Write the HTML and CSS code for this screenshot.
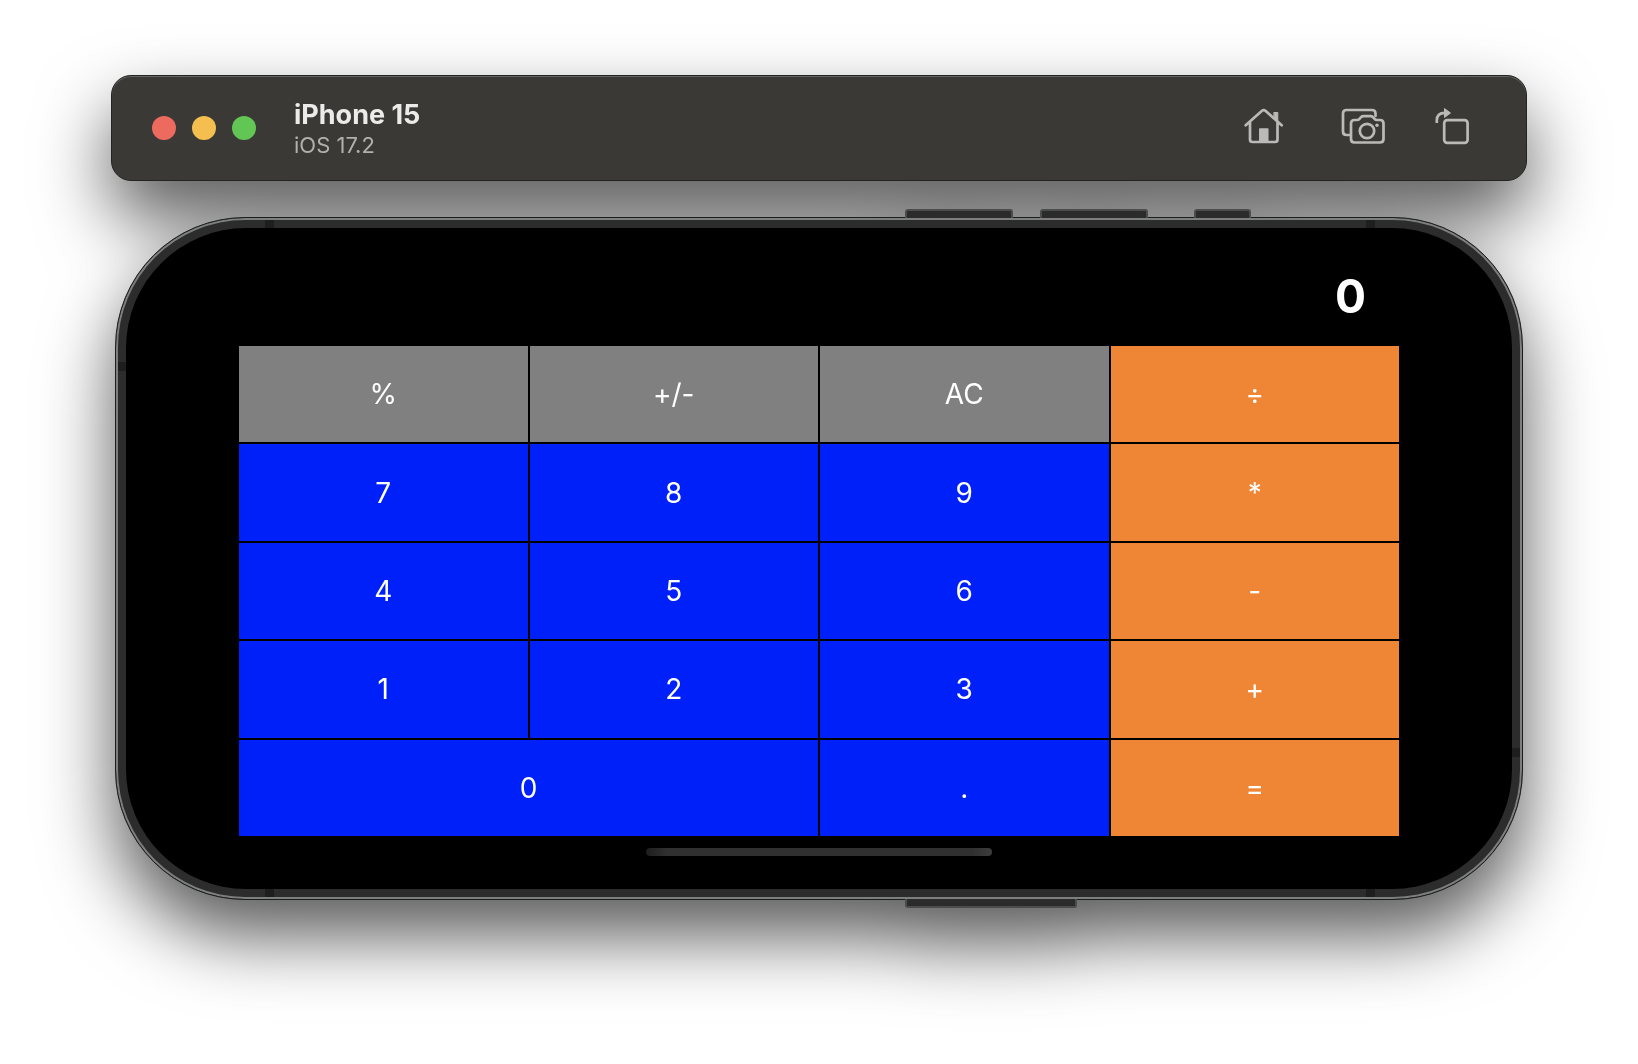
FILE: index.html
```html
<!DOCTYPE html>
<html lang="en">
<head>
<meta charset="utf-8">
<title>iPhone 15 – Calculator</title>
<meta name="viewport" content="width=device-width, initial-scale=1">
<link rel="stylesheet" href="styles.css">
</head>
<body>
<main class="simulator">
  <header class="titlebar">
    <div class="lights">
      <button class="light light-close" type="button" aria-label="Close"></button>
      <button class="light light-minimize" type="button" aria-label="Minimize"></button>
      <button class="light light-zoom" type="button" aria-label="Zoom"></button>
    </div>
    <div class="heading">
      <h1 class="name">iPhone 15</h1>
      <p class="version">iOS 17.2</p>
    </div>
    <nav class="tools">
      <button class="tool" type="button" aria-label="Home">
        <svg width="40" height="38" viewBox="0 0 40 38" fill="none" stroke="currentColor" stroke-width="2.7" stroke-linecap="round" stroke-linejoin="round">
          <path d="M1.7 18.3 18 3.8Q19.7 2.4 21.4 3.8L37.700 18.300M6 15V32.500Q6 35 8.500 35H31Q33.500 35 33.500 32.500V15"/>
          <path d="M30.200 5.500h3.600v9.800l-3.600-3.200z" fill="currentColor" stroke-width="1"/>
          <path d="M15.800 22h8v12h-8z" fill="currentColor" stroke-width="1.500"/>
        </svg>
      </button>
      <button class="tool" type="button" aria-label="Screenshot">
        <svg width="44" height="38" viewBox="0 0 44 38" fill="none" stroke="currentColor" stroke-width="2.700" stroke-linecap="round" stroke-linejoin="round">
          <path d="M8.500 28H5.500Q2 28 2 24.500V6.500Q2 3 5.500 3H31Q34.500 3 34.500 6.500V9"/>
          <path d="M10 32V16.500Q10 13 13.500 13H16Q17.500 13 18.500 11.800L20 10.200Q21 9.200 22.500 9.200H29.500Q31 9.200 32 10.200L33.500 11.800Q34.500 13 36 13H39Q42.500 13 42.500 16.500V32Q42.500 35.500 39 35.500H13.500Q10 35.500 10 32Z"/>
          <circle cx="26" cy="24" r="7.200"/>
          <circle cx="36" cy="18.200" r="1.700" fill="currentColor" stroke="none"/>
        </svg>
      </button>
      <button class="tool" type="button" aria-label="Rotate">
        <svg width="36" height="38" viewBox="0 0 36 38" fill="none" stroke="currentColor" stroke-width="2.700">
          <rect x="10.200" y="13.200" width="23.400" height="22.600" rx="3"/>
          <path d="M2.800 16V13.500Q2.800 5.800 11 5.800"/>
          <path d="M10.500 1.600v8.800L16.500 6z" fill="currentColor" stroke-width="1" stroke-linejoin="round"/>
        </svg>
      </button>
    </nav>
  </header>

  <section class="device" aria-label="Device">
    <span class="key key-volume-down"></span>
    <span class="key key-volume-up"></span>
    <span class="key key-action"></span>
    <span class="key key-power"></span>
    <div class="screen">
      <output class="display">0</output>
      <div class="keypad">
        <button class="pad pad-function" type="button">%</button>
        <button class="pad pad-function" type="button">+/-</button>
        <button class="pad pad-function" type="button">AC</button>
        <button class="pad pad-operator" type="button">÷</button>
        <button class="pad" type="button">7</button>
        <button class="pad" type="button">8</button>
        <button class="pad" type="button">9</button>
        <button class="pad pad-operator" type="button">*</button>
        <button class="pad" type="button">4</button>
        <button class="pad" type="button">5</button>
        <button class="pad" type="button">6</button>
        <button class="pad pad-operator" type="button">-</button>
        <button class="pad" type="button">1</button>
        <button class="pad" type="button">2</button>
        <button class="pad" type="button">3</button>
        <button class="pad pad-operator" type="button">+</button>
        <button class="pad pad-wide" type="button">0</button>
        <button class="pad" type="button">.</button>
        <button class="pad pad-operator" type="button">=</button>
      </div>
      <div class="home-indicator"></div>
    </div>
  </section>
</main>
</body>
</html>
```
FILE: styles.css
```css
* {
  box-sizing: border-box;
}

body {
  margin: 0;
  background: #fff;
  font-family: Inter, "Liberation Sans", sans-serif;
}

button {
  margin: 0;
  padding: 0;
  border: 0;
  background: none;
  color: inherit;
  font: inherit;
}

.simulator {
  display: flex;
  flex-direction: column;
  gap: 36px;
  padding: 75px 111px 164px;
  filter: drop-shadow(0 36px 36px rgba(0, 0, 0, 0.65));
}

/* Title bar */

.titlebar {
  display: flex;
  align-items: center;
  height: 106px;
  padding: 0 56px 0 40px;
  border: 1px solid #222423;
  border-radius: 20px;
  background: #3b3936;
  box-shadow: inset 0 1px 0 #656663;
}

.lights {
  display: flex;
  gap: 16px;
}

.light {
  width: 24px;
  height: 24px;
  border-radius: 50%;
}

.light-close {
  background: #ed6a5f;
}

.light-minimize {
  background: #f5bf4f;
}

.light-zoom {
  background: #62c655;
}

.heading {
  flex: 1;
  padding: 2px 0 0 38px;
}

.name,
.version {
  margin: 0;
}

.name {
  color: #ebebea;
  font-size: 27px;
  font-weight: 700;
  line-height: 32px;
}

.version {
  color: #b1b0af;
  font-size: 22px;
  line-height: 28px;
}

.tools {
  display: flex;
  align-items: center;
  gap: 57px;
  padding-bottom: 4px;
  color: #bbbab8;
}

.tool {
  display: flex;
}

.tool:last-child {
  margin-left: -8px;
}

/* Device body, with the antenna bands painted into the frame */

.device {
  position: relative;
  margin: 0 4px;
  padding: 10px;
  border: 1px solid #1c1d1d;
  border-radius: 130px;
  background:
    linear-gradient(#1e1e1e, #1e1e1e) 149px 0 / 9px 100% no-repeat,
    linear-gradient(#1e1e1e, #1e1e1e) right 147px top 0 / 9px 100% no-repeat,
    linear-gradient(#1e1e1e, #1e1e1e) left 0 top 144px / 10px 9px no-repeat,
    linear-gradient(#1e1e1e, #1e1e1e) right 0 bottom 142px / 10px 9px no-repeat,
    #2c2c2c;
  box-shadow: inset 0 0 0 2px #7d7e7e;
}

.key {
  position: absolute;
  top: -9px;
  height: 9px;
  border: 2px solid #4b4c4c;
  border-bottom: 0;
  border-radius: 3px 3px 0 0;
  background: #2b2b2b;
}

.key-volume-down {
  right: 509px;
  width: 108px;
}

.key-volume-up {
  right: 374px;
  width: 108px;
}

.key-action {
  right: 271px;
  width: 57px;
}

.key-power {
  top: auto;
  right: 445px;
  bottom: -9px;
  width: 172px;
  border-top: 0;
  border-bottom: 2px solid #4b4c4c;
  border-radius: 0 0 3px 3px;
}

.screen {
  display: flex;
  flex-direction: column;
  padding: 0 113px 33px;
  border-radius: 120px;
  background: #000;
}

/* Calculator */

.display {
  padding: 38px 33px 20px;
  color: #fff;
  font-size: 46px;
  font-weight: 700;
  line-height: 60px;
  text-align: right;
}

.keypad {
  display: grid;
  grid-template-columns: repeat(4, 1fr);
  grid-auto-rows: 1fr;
  gap: 2px;
  min-height: 490px;
}

.pad {
  background: #0020f9;
  color: #fff;
  font-size: 28px;
  line-height: 36px;
}

.pad-wide {
  grid-column: span 2;
}

.pad-function {
  background: #808080;
}

.pad-operator {
  background: #ee8636;
}

.home-indicator {
  align-self: center;
  width: 346px;
  height: 8px;
  margin-top: 12px;
  border-radius: 4px;
  background: linear-gradient(90deg, #1d1d1d, #303030 6%, #303030 94%, #3c3c3c);
}
```
